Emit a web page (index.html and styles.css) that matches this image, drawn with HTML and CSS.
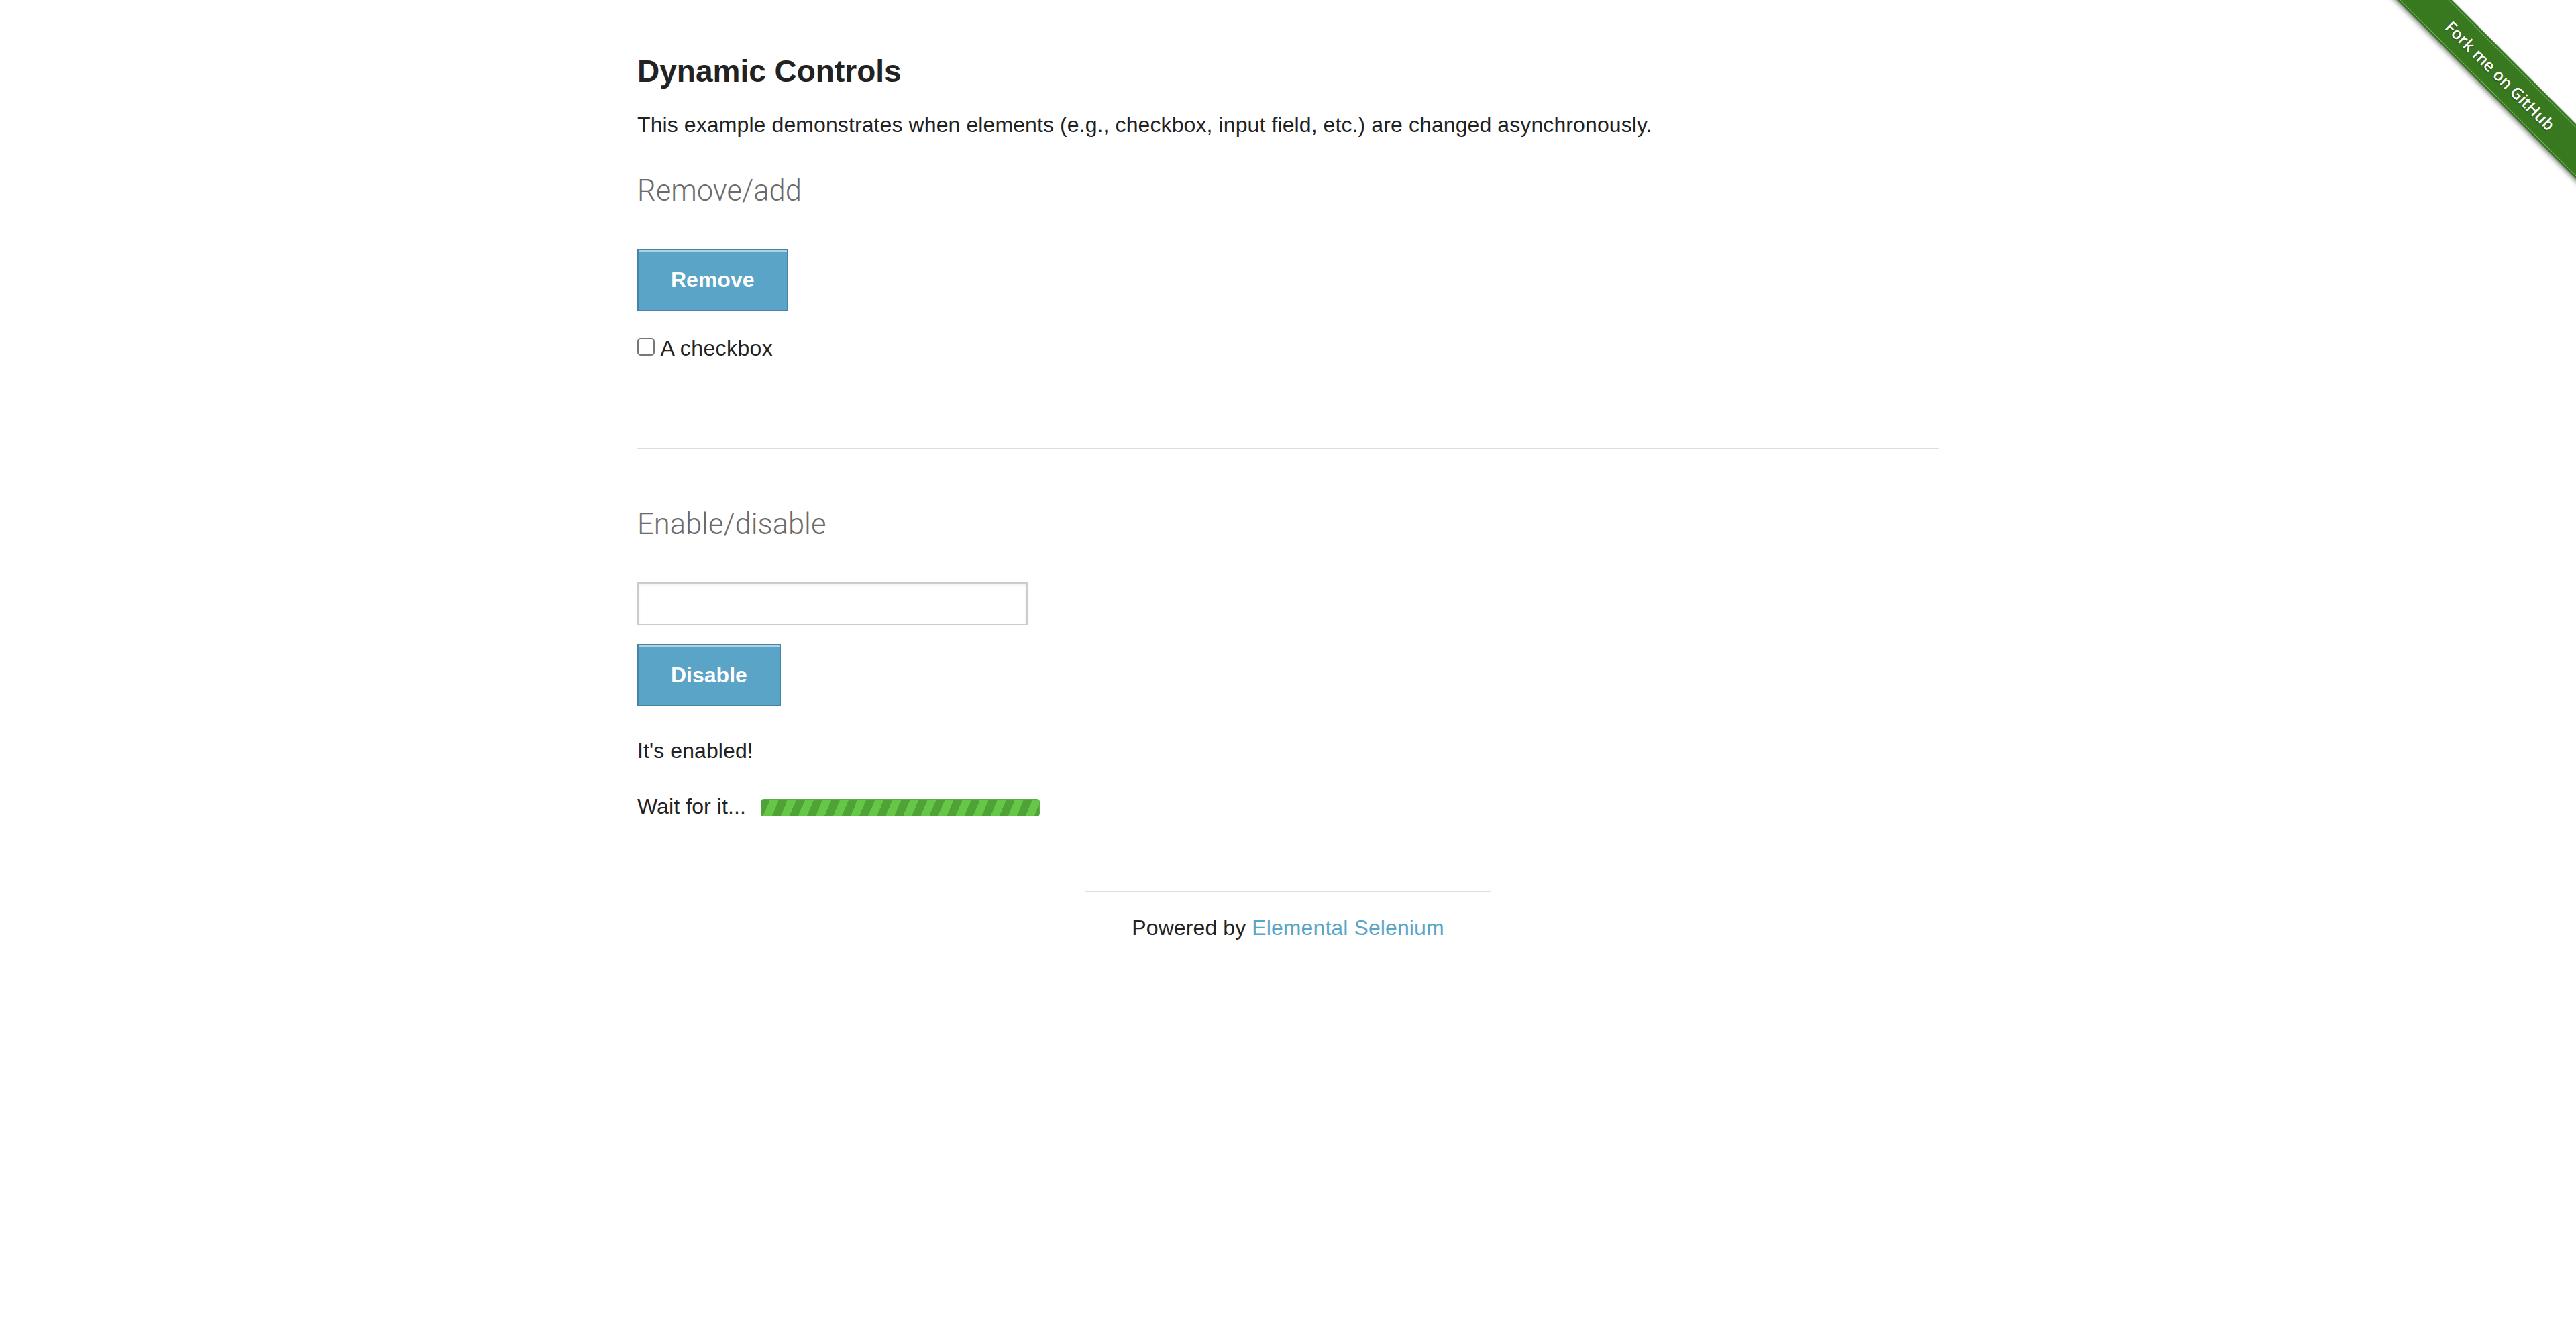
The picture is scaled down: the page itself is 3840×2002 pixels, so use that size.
FILE: index.html
```html
<!DOCTYPE html>
<html lang="en">
<head>
<meta charset="utf-8">
<title>The Internet</title>
<link rel="stylesheet" href="styles.css">
</head>
<body>
<div class="page">
  <div class="content">
    <h3 class="title">Dynamic Controls</h3>
    <p class="desc">This example demonstrates when elements (e.g., checkbox, input field, etc.) are changed asynchronously.</p>
    <h4 class="subhead">Remove/add</h4>
    <div class="btn-row"><button class="btn" type="button">Remove</button></div>
    <div class="check-row"><input type="checkbox" class="chk"> A checkbox</div>
    <hr class="divider">
    <h4 class="subhead subhead-2">Enable/disable</h4>
    <input type="text" class="field">
    <div class="btn-row btn-row-2"><button class="btn" type="button">Disable</button></div>
    <p class="msg">It's enabled!</p>
    <div class="wait">Wait for it...<span class="bar"></span></div>
  </div>
  <footer class="footer">
    <hr class="footer-rule">
    <p class="powered">Powered by <a class="link" href="#">Elemental Selenium</a></p>
  </footer>
</div>
<a class="ribbon-wrap" href="#"><span class="ribbon">Fork me on GitHub</span></a>
</body>
</html>
```
FILE: styles.css
```css
html, body {
  margin: 0;
  padding: 0;
  background: #ffffff;
}
body {
  font-family: "Liberation Sans", Arial, Helvetica, sans-serif;
  color: #222222;
  font-size: 32px;
  line-height: 44px;
  letter-spacing: 0.1px;
}
.page {
  position: relative;
}
.content {
  width: 1940px;
  margin: 0 auto;
}
.title {
  margin: 78px 0 0;
  font-size: 46px;
  line-height: 56px;
  font-weight: bold;
  color: #222222;
  letter-spacing: 0;
}
.desc {
  margin: 30px 0 0;
  font-size: 32px;
  line-height: 44px;
}
.subhead {
  margin: 50px 0 0;
  font-family: Roboto, "Liberation Sans", sans-serif;
  font-weight: 300;
  font-size: 43.5px;
  line-height: 54px;
  color: #6b6b6b;
  letter-spacing: 0;
}
.subhead-2 {
  margin-top: 85px;
}
.btn-row {
  display: flex;
  margin-top: 59px;
}
.btn-row-2 {
  margin-top: 28px;
}
.btn {
  display: inline-block;
  box-sizing: border-box;
  margin: 0;
  padding: 24px 48px;
  border: 2px solid #4783a4;
  background: #5aa4c8;
  box-shadow: inset 0 2px 0 rgba(255, 255, 255, 0.5);
  color: #ffffff;
  font-family: "Liberation Sans", Arial, sans-serif;
  font-weight: bold;
  font-size: 32px;
  line-height: 41px;
  cursor: pointer;
}
.check-row {
  margin-top: 33px;
  font-size: 32px;
  line-height: 44px;
  letter-spacing: 0.4px;
}
.chk {
  -webkit-appearance: none;
  appearance: none;
  display: inline-block;
  box-sizing: border-box;
  width: 26px;
  height: 26px;
  margin: 0 1px 0 0;
  border: 2px solid #767676;
  border-radius: 5px;
  background: #ffffff;
  vertical-align: baseline;
}
.divider {
  margin: 127px 0 0;
  height: 0;
  border: 0;
  border-top: 2px solid #dddddd;
}
.field {
  display: block;
  box-sizing: border-box;
  width: 582px;
  height: 64px;
  margin: 59px 0 0;
  padding: 0 14px;
  border: 2px solid #cccccc;
  background: #ffffff;
  box-shadow: inset 0 2px 4px rgba(0, 0, 0, 0.08);
  font-size: 28px;
}
.msg {
  margin: 44px 0 0;
  font-size: 32px;
  line-height: 44px;
}
.wait {
  margin-top: 39px;
  font-size: 32px;
  line-height: 44px;
}
.bar {
  display: inline-block;
  box-sizing: border-box;
  width: 416px;
  height: 26px;
  margin-left: 22px;
  vertical-align: -4px;
  border: 1px solid #5cae45;
  border-radius: 4px;
  background: repeating-linear-gradient(113deg, #4ea236 0 12px, #66c648 12px 24px);
}
.footer {
  margin-top: 104px;
}
.footer-rule {
  width: 606px;
  height: 0;
  margin: 0 auto;
  border: 0;
  border-top: 2px solid #dddddd;
}
.powered {
  margin: 31px 0 0;
  text-align: center;
  font-size: 32px;
  line-height: 44px;
}
.link {
  color: #5aa4c8;
  text-decoration: none;
}
.ribbon-wrap {
  position: absolute;
  top: 0;
  right: 0;
  width: 300px;
  height: 300px;
  overflow: hidden;
  text-decoration: none;
}
.ribbon {
  position: absolute;
  left: -23px;
  top: 84px;
  width: 420px;
  height: 58px;
  transform: rotate(45deg);
  background: #38791f;
  box-shadow: 0 3px 6px rgba(0, 0, 0, 0.45);
  color: #ffffff;
  font-family: "Open Sans", "DejaVu Sans", sans-serif;
  font-weight: 600;
  font-size: 24px;
  line-height: 58px;
  text-align: center;
  letter-spacing: 0;
  text-shadow: 0 1px 2px rgba(0, 0, 0, 0.5);
}
.ribbon::before {
  content: "";
  position: absolute;
  left: 0;
  right: 0;
  top: 3px;
  bottom: 3px;
  border-top: 1px solid rgba(255, 255, 255, 0.35);
  border-bottom: 1px solid rgba(255, 255, 255, 0.35);
}
```
